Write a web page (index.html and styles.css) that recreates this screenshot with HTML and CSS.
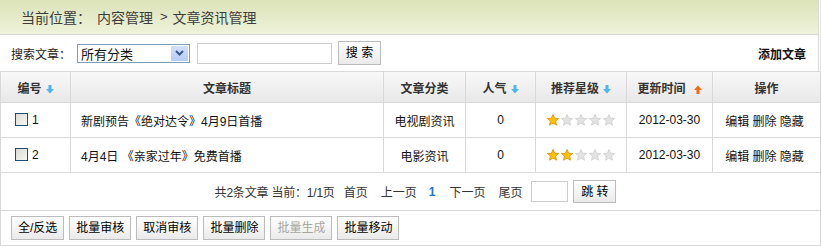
FILE: index.html
```html
<!DOCTYPE html>
<html lang="zh-CN">
<head>
<meta charset="utf-8">
<title>文章资讯管理</title>
<link rel="stylesheet" href="styles.css">
</head>
<body>
<div class="page">
  <div class="crumb">
    <span class="crumb-label">当前位置：</span><span class="crumb-item">内容管理</span><span class="crumb-sep">&gt;</span><span>文章资讯管理</span>
  </div>
  <div class="toolbar">
    <span class="tb-label">搜索文章：</span>
    <div class="select">
      <span class="select-text">所有分类</span>
      <span class="select-btn"><svg width="9" height="6" viewBox="0 0 9 6"><path d="M1 1 L4.5 4.5 L8 1" fill="none" stroke="#3a5a8c" stroke-width="2"/></svg></span>
    </div>
    <input class="search-input" type="text">
    <button class="btn search-btn">搜 索</button>
    <a class="add-link">添加文章</a>
  </div>
  <table class="grid">
    <colgroup>
      <col class="c1"><col class="c2"><col class="c3"><col class="c4"><col class="c5"><col class="c6"><col class="c7">
    </colgroup>
    <thead>
      <tr>
        <th>编号<svg class="arrow" width="8" height="9" viewBox="0 0 8 9"><path d="M2.5 0h3v4h2.5L4 8.5 0 4h2.5z" fill="#4cb4ef"/></svg></th>
        <th>文章标题</th>
        <th>文章分类</th>
        <th>人气<svg class="arrow" width="8" height="9" viewBox="0 0 8 9"><path d="M2.5 0h3v4h2.5L4 8.5 0 4h2.5z" fill="#4cb4ef"/></svg></th>
        <th>推荐星级<svg class="arrow" width="8" height="9" viewBox="0 0 8 9"><path d="M2.5 0h3v4h2.5L4 8.5 0 4h2.5z" fill="#4cb4ef"/></svg></th>
        <th>更新时间<svg class="arrow up" width="8" height="9" viewBox="0 0 8 9"><path d="M2.5 9h3v-4h2.5L4 0.5 0 5h2.5z" fill="#f26a12"/></svg></th>
        <th class="last">操作</th>
      </tr>
    </thead>
    <tbody>
      <tr>
        <td class="id"><span class="chk"></span>1</td>
        <td class="title">新剧预告《绝对达令》4月9日首播</td>
        <td>电视剧资讯</td>
        <td>0</td>
        <td><span class="stars"><svg class="star on" viewBox="0 0 12 12"><path d="M6 0.5 7.6 4.2 11.6 4.5 8.6 7.1 9.5 11.2 6 9.1 2.5 11.2 3.4 7.1 0.4 4.5 4.4 4.2z"/></svg><svg class="star" viewBox="0 0 12 12"><path d="M6 0.5 7.6 4.2 11.6 4.5 8.6 7.1 9.5 11.2 6 9.1 2.5 11.2 3.4 7.1 0.4 4.5 4.4 4.2z"/></svg><svg class="star" viewBox="0 0 12 12"><path d="M6 0.5 7.6 4.2 11.6 4.5 8.6 7.1 9.5 11.2 6 9.1 2.5 11.2 3.4 7.1 0.4 4.5 4.4 4.2z"/></svg><svg class="star" viewBox="0 0 12 12"><path d="M6 0.5 7.6 4.2 11.6 4.5 8.6 7.1 9.5 11.2 6 9.1 2.5 11.2 3.4 7.1 0.4 4.5 4.4 4.2z"/></svg><svg class="star" viewBox="0 0 12 12"><path d="M6 0.5 7.6 4.2 11.6 4.5 8.6 7.1 9.5 11.2 6 9.1 2.5 11.2 3.4 7.1 0.4 4.5 4.4 4.2z"/></svg></span></td>
        <td>2012-03-30</td>
        <td class="last ops">编辑 删除 隐藏</td>
      </tr>
      <tr>
        <td class="id"><span class="chk"></span>2</td>
        <td class="title">4月4日 《亲家过年》免费首播</td>
        <td>电影资讯</td>
        <td>0</td>
        <td><span class="stars"><svg class="star on" viewBox="0 0 12 12"><path d="M6 0.5 7.6 4.2 11.6 4.5 8.6 7.1 9.5 11.2 6 9.1 2.5 11.2 3.4 7.1 0.4 4.5 4.4 4.2z"/></svg><svg class="star on" viewBox="0 0 12 12"><path d="M6 0.5 7.6 4.2 11.6 4.5 8.6 7.1 9.5 11.2 6 9.1 2.5 11.2 3.4 7.1 0.4 4.5 4.4 4.2z"/></svg><svg class="star" viewBox="0 0 12 12"><path d="M6 0.5 7.6 4.2 11.6 4.5 8.6 7.1 9.5 11.2 6 9.1 2.5 11.2 3.4 7.1 0.4 4.5 4.4 4.2z"/></svg><svg class="star" viewBox="0 0 12 12"><path d="M6 0.5 7.6 4.2 11.6 4.5 8.6 7.1 9.5 11.2 6 9.1 2.5 11.2 3.4 7.1 0.4 4.5 4.4 4.2z"/></svg><svg class="star" viewBox="0 0 12 12"><path d="M6 0.5 7.6 4.2 11.6 4.5 8.6 7.1 9.5 11.2 6 9.1 2.5 11.2 3.4 7.1 0.4 4.5 4.4 4.2z"/></svg></span></td>
        <td>2012-03-30</td>
        <td class="last ops">编辑 删除 隐藏</td>
      </tr>
    </tbody>
    <tfoot>
      <tr class="pager-row">
        <td colspan="7" class="last">
          <div class="pager">
            <span class="summary">共2条文章 当前：1/1页</span>
            <span class="pg">首页</span>
            <span class="pg">上一页</span>
            <span class="pg cur">1</span>
            <span class="pg">下一页</span>
            <span class="pg">尾页</span>
            <input class="page-input" type="text">
            <button class="btn jump-btn">跳 转</button>
          </div>
        </td>
      </tr>
      <tr class="action-row">
        <td colspan="7" class="last">
          <div class="actions">
            <button class="btn act">全/反选</button>
            <button class="btn act">批量审核</button>
            <button class="btn act">取消审核</button>
            <button class="btn act">批量删除</button>
            <button class="btn act disabled">批量生成</button>
            <button class="btn act">批量移动</button>
          </div>
        </td>
      </tr>
    </tfoot>
  </table>
</div>
</body>
</html>
```

FILE: styles.css
```css
* { box-sizing: border-box; }
html, body { margin: 0; padding: 0; background: #fff; }
body {
  font-family: "Liberation Sans", "Noto Sans CJK SC", sans-serif;
  font-size: 12px;
  color: #222;
}
.page {
  width: 821px;
  border-right: 1px solid #e4e4e4;
}
.page > * { margin-right: 1px; }
.crumb {
  height: 35px;
  background: linear-gradient(#dce3b8, #eef2da);
  border-bottom: 1px solid #d6d6d6;
  border-right: 1px solid #d9d9d9;
  padding-left: 21px;
  display: flex;
  align-items: center;
  font-size: 14px;
  color: #3c3c3c;
  padding-bottom: 1px;
}
.crumb-label { margin-right: 6px; }
.crumb-sep { margin: 0 5px 0 7px; font-size: 13px; }
.toolbar {
  height: 36px;
  display: flex;
  align-items: center;
  padding-left: 11px;
  padding-right: 12px;
  border-right: 1px solid #d9d9d9;
}
.tb-label { width: 66px; color: #222; }
.select {
  width: 113px;
  height: 19px;
  border: 1px solid #7f9db9;
  display: flex;
  align-items: center;
  justify-content: space-between;
  padding-left: 3px;
  padding-right: 1px;
}
.select-text { font-size: 13px; color: #111; }
.select-btn {
  width: 17px;
  height: 15px;
  background: linear-gradient(#d3e0fb, #b6cbf6);
  border-radius: 1px;
  display: flex;
  align-items: center;
  justify-content: center;
}
.search-input {
  width: 135px;
  height: 21px;
  margin-left: 7px;
  border: 1px solid #cdcdcd;
  padding: 0;
}
.btn {
  font-family: "Liberation Sans", "Noto Sans CJK SC", sans-serif;
  font-size: 12px;
  color: #000;
  background: linear-gradient(#ffffff, #eaeaea);
  border: 1px solid #bcbcbc;
  padding: 0 6px;
  margin: 0;
  line-height: 1;
}
.search-btn {
  width: 43px;
  height: 24px;
  margin-left: 6px;
  font-size: 12px;
}
.add-link {
  margin-left: auto;
  font-weight: bold;
  color: #111;
}
.grid {
  width: 820px;
  border-collapse: separate;
  border-spacing: 0;
  table-layout: fixed;
  border-top: 1px solid #d9d9d9;
  border-left: 1px solid #d9d9d9;
}
.c1 { width: 70px; }
.c2 { width: 313px; }
.c3 { width: 82px; }
.c4 { width: 70px; }
.c5 { width: 91px; }
.c6 { width: 86px; }
.c7 { width: 108px; }
.grid th, .grid td {
  border-right: 1px solid #d9d9d9;
  border-bottom: 1px solid #d9d9d9;
  padding: 0;
  text-align: center;
  vertical-align: middle;
}
.grid th.last, .grid td.last { border-right: 1px solid #d4d4d4; }
.grid th {
  height: 31px;
  background: linear-gradient(#f8f8f8, #e8e8e8);
  font-weight: bold;
  color: #333;
}
.arrow { margin-left: 4px; vertical-align: -1px; }
.arrow.up { margin-left: 8px; }
.grid tbody td { height: 35px; color: #111; }
.grid td.id { text-align: left; padding-left: 14px; }
.grid td.title { text-align: left; padding-left: 10px; }
.grid td.ops { color: #111; padding-right: 4px; }
.chk {
  display: inline-block;
  width: 13px;
  height: 13px;
  border: 1px solid #1f4e7c;
  background: linear-gradient(135deg, #dcdcd4, #f7f7f3);
  vertical-align: -2px;
  margin-right: 4px;
}
.stars { display: inline-flex; gap: 2px; vertical-align: -2px; }
.star { width: 12px; height: 12px; }
.star path { fill: #e3e3e3; stroke: #c9c9c9; stroke-width: 0.7; }
.star.on path { fill: #ffc000; stroke: #e08a00; stroke-width: 0.8; }
.pager-row td { height: 38px; }
.pager {
  display: flex;
  align-items: center;
  justify-content: center;
  color: #333;
  padding-left: 10px;
}
.summary { letter-spacing: -0.2px; }
.pg { margin-left: 9px; }
.pg + .pg { margin-left: 13px; }
.pg.cur { color: #1a74d6; font-weight: bold; margin-left: 12px; margin-right: 1px; }
.page-input {
  width: 37px;
  height: 21px;
  border: 1px solid #cdcdcd;
  margin-left: 9px;
  padding: 0;
}
.jump-btn {
  width: 43px;
  height: 23px;
  margin-left: 5px;
}
.action-row td { height: 35px; }
.actions {
  display: flex;
  gap: 5px;
  padding-left: 10px;
  align-items: center;
}
.act { height: 24px; }
.act.disabled { color: #a8a8a0; }
```
